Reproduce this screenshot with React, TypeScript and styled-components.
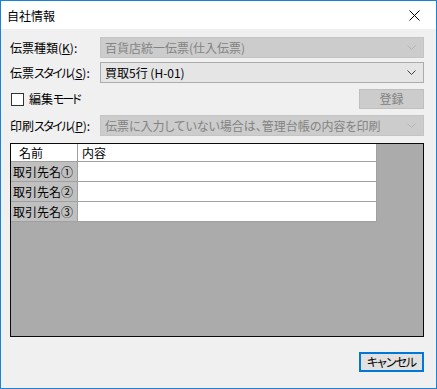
import React from 'react';
import styled, { createGlobalStyle } from 'styled-components';

const GlobalStyle = createGlobalStyle`
  html, body {
    margin: 0;
    padding: 0;
    background: #ffffff;
  }
  * {
    box-sizing: border-box;
  }
`;

const Window = styled.div`
  width: 437px;
  height: 389px;
  border: 1px solid #1883d7;
  background: #f0f0f0;
  display: flex;
  flex-direction: column;
  font-family: "Noto Sans CJK JP", "Noto Sans", sans-serif;
  font-size: 12px;
  font-feature-settings: "palt";
  color: #000;
`;

const TitleBar = styled.div`
  height: 28px;
  background: #ffffff;
  display: flex;
  align-items: center;
  justify-content: space-between;
  padding: 0 16px 0 6px;
  font-size: 12px;
`;

const Content = styled.div`
  flex: 1;
  display: flex;
  flex-direction: column;
  padding: 8px 12px 15px 9px;
`;

const FormRow = styled.div<{ $mb: number; $h: number }>`
  display: flex;
  align-items: center;
  height: ${p => p.$h}px;
  margin-bottom: ${p => p.$mb}px;
`;

const Label = styled.div`
  width: 90px;
  flex: none;
  line-height: 16px;
  white-space: nowrap;
`;

// Meiryo UI draws katakana narrower than kanji
const Kana = styled.span<{ $ls?: number }>`
  letter-spacing: ${p => p.$ls ?? -1.5}px;
`;

const Combo = styled.div<{ $disabled?: boolean }>`
  flex: 1;
  min-width: 0;
  height: 21px;
  display: flex;
  align-items: center;
  justify-content: space-between;
  padding: 0 7px 0 4px;
  border: 1px solid ${p => (p.$disabled ? '#c4c4c4' : '#acacac')};
  background: ${p => (p.$disabled ? '#cccccc' : '#e5e5e5')};
  color: ${p => (p.$disabled ? '#838383' : '#000')};
  line-height: 16px;
  white-space: nowrap;
  overflow: hidden;
`;

const CheckLabel = styled.label`
  display: flex;
  align-items: center;
  gap: 5px;
  line-height: 16px;
  padding-left: 1px;
`;

const CheckBox = styled.span`
  width: 13px;
  height: 13px;
  border: 1px solid #333333;
  background: #ffffff;
`;

const Spacer = styled.div`
  flex: 1;
`;

const Button = styled.div<{ $disabled?: boolean; $default?: boolean }>`
  width: 65px;
  height: 20px;
  display: flex;
  align-items: center;
  justify-content: center;
  line-height: 16px;
  background: ${p => (p.$disabled ? '#cccccc' : '#e1e1e1')};
  color: ${p => (p.$disabled ? '#838383' : '#000')};
  border: ${p => (p.$default ? '2px solid #0078d7' : p.$disabled ? '1px solid #bfbfbf' : '1px solid #adadad')};
`;

const GridPanel = styled.div`
  height: 194px;
  margin-top: 3px;
  border: 1px solid #0a0a0a;
  background: #ababab;
  display: flex;
  flex-direction: column;
  align-items: flex-start;
`;

const Table = styled.div`
  display: grid;
  grid-template-columns: 67px 299px;
  grid-template-rows: 18px 20px 20px 20px;
`;

const Cell = styled.div<{ $pad?: number; $rowHead?: boolean }>`
  background: ${p => (p.$rowHead ? '#c0c0c0' : '#ffffff')};
  border-right: 1px solid #a0a0a0;
  border-bottom: 1px solid #a0a0a0;
  display: flex;
  align-items: center;
  padding-left: ${p => p.$pad ?? 2}px;
  line-height: 16px;
  white-space: nowrap;
`;

const Footer = styled.div`
  display: flex;
  justify-content: flex-end;
  margin-top: 15px;
`;

const Chevron = ({ color }: { color: string }) => (
  <svg width="9" height="6" viewBox="0 0 9 6">
    <polyline points="0.5,0.5 4.5,4.5 8.5,0.5" fill="none" stroke={color} strokeWidth="1" />
  </svg>
);

const CloseIcon = () => (
  <svg width="11" height="11" viewBox="0 0 11 11">
    <line x1="0.5" y1="0.5" x2="10.5" y2="10.5" stroke="#000" strokeWidth="1" />
    <line x1="10.5" y1="0.5" x2="0.5" y2="10.5" stroke="#000" strokeWidth="1" />
  </svg>
);

const rows = ['取引先名①', '取引先名②', '取引先名③'];

const App: React.FC = () => {
  return (
    <>
      <GlobalStyle />
      <Window>
        <TitleBar>
          <span>自社情報</span>
          <CloseIcon />
        </TitleBar>
        <Content>
          <FormRow $h={21} $mb={4}>
            <Label>伝票種類(<u>K</u>):</Label>
            <Combo $disabled>
              <span>百貨店統一伝票(仕入伝票)</span>
              <Chevron color="#b4b4b4" />
            </Combo>
          </FormRow>
          <FormRow $h={21} $mb={5}>
            <Label>伝票<Kana>スタイル</Kana>(<u>S</u>):</Label>
            <Combo>
              <span>買取5行 (H-01)</span>
              <Chevron color="#404040" />
            </Combo>
          </FormRow>
          <FormRow $h={22} $mb={5}>
            <CheckLabel>
              <CheckBox />
              <span>編集<Kana $ls={-2}>モード</Kana></span>
            </CheckLabel>
            <Spacer />
            <Button $disabled>登録</Button>
          </FormRow>
          <FormRow $h={21} $mb={4}>
            <Label>印刷<Kana>スタイル</Kana>(<u>P</u>):</Label>
            <Combo $disabled>
              <span>伝票に入力していない場合は、管理台帳の内容を印刷</span>
              <Chevron color="#b4b4b4" />
            </Combo>
          </FormRow>
          <GridPanel>
            <Table>
              <Cell $pad={8}>名前</Cell>
              <Cell $pad={4}>内容</Cell>
              {rows.map(r => (
                <React.Fragment key={r}>
                  <Cell $rowHead>{r}</Cell>
                  <Cell />
                </React.Fragment>
              ))}
            </Table>
          </GridPanel>
          <Footer>
            <Button $default><Kana $ls={-1}>キャンセル</Kana></Button>
          </Footer>
        </Content>
      </Window>
    </>
  );
};

export default App;
